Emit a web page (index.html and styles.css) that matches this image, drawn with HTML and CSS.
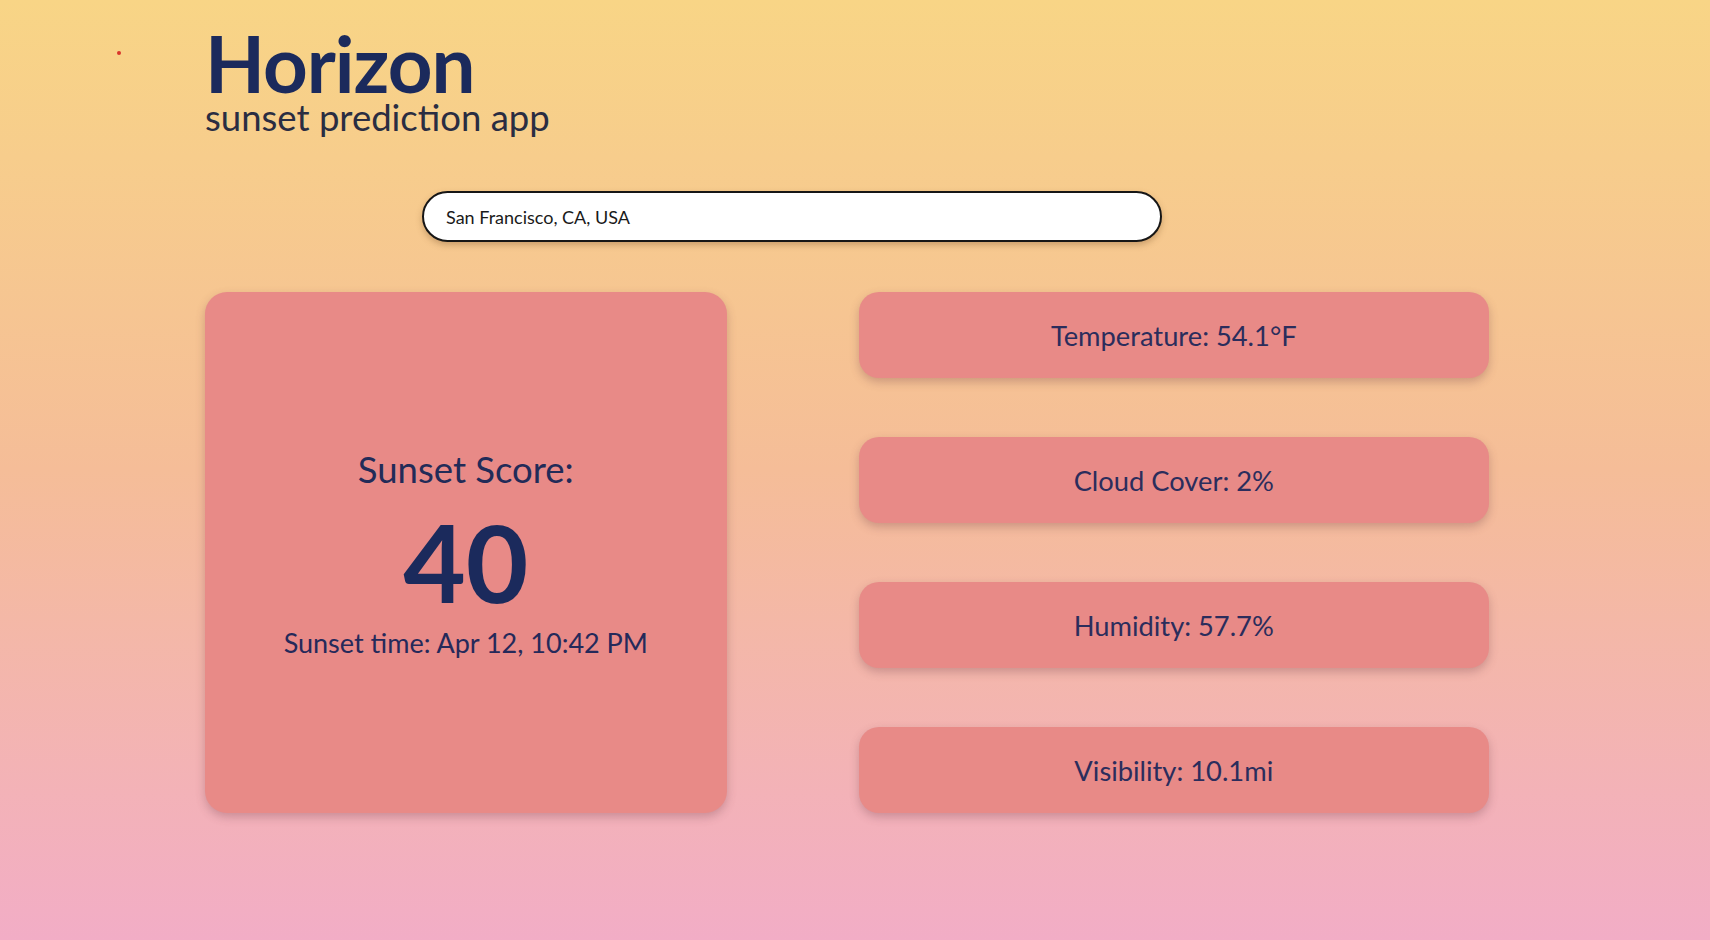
FILE: index.html
```html
<!DOCTYPE html>
<html lang="en">
<head>
<meta charset="utf-8">
<title>Horizon</title>
<link rel="stylesheet" href="styles.css">
</head>
<body>
<span class="dot"></span>
<main class="app">
  <header class="header">
    <h1 class="title">Horizon</h1>
    <p class="subtitle">sunset prediction app</p>
  </header>
  <div class="search-row">
    <input class="search" type="text" value="San Francisco, CA, USA">
  </div>
  <section class="grid">
    <div class="score-card">
      <div class="score-label">Sunset Score:</div>
      <div class="score-value">40</div>
      <div class="score-time">Sunset time: Apr 12, 10:42 PM</div>
    </div>
    <div class="stats">
      <div class="stat">Temperature: 54.1°F</div>
      <div class="stat">Cloud Cover: 2%</div>
      <div class="stat">Humidity: 57.7%</div>
      <div class="stat">Visibility: 10.1mi</div>
    </div>
  </section>
</main>
</body>
</html>
```

FILE: styles.css
```css
* { box-sizing: border-box; }
html, body { height: 100%; }
body {
  margin: 0;
  min-height: 940px;
  font-family: Lato, "Noto Sans", sans-serif;
  background: linear-gradient(to bottom, #f8d586 0%, #f5bd98 50%, #f2adc6 100%);
  color: #1c2a5a;
  position: relative;
}
.dot {
  position: absolute;
  left: 117px;
  top: 51px;
  width: 4px;
  height: 4px;
  border-radius: 50%;
  background: #d9342b;
}
.app {
  padding: 30px 0 0 205px;
  width: 1489px;
}
.header { display: flex; flex-direction: column; }
.title {
  margin: 0;
  font-size: 78px;
  font-weight: 700;
  line-height: 66px;
  color: #1b2a5c;
  letter-spacing: -1px;
}
.subtitle {
  margin: 1px 0 0;
  font-size: 36.5px;
  font-weight: 400;
  line-height: 40px;
  color: #2a2d42;
}
.search-row {
  margin-top: 54px;
  padding-left: 217px;
}
.search {
  display: block;
  width: 740px;
  height: 51px;
  border: 2px solid #161616;
  border-radius: 26px;
  background: #fff;
  padding: 0 22px;
  font-family: Lato, "Noto Sans", sans-serif;
  font-size: 18px;
  color: #1a1a1a;
  box-shadow: 0 3px 6px rgba(120, 80, 40, 0.35);
  outline: none;
}
.grid {
  margin-top: 50px;
  display: flex;
  gap: 132px;
}
.score-card {
  width: 522px;
  height: 521px;
  background: #e88a87;
  border-radius: 22px;
  box-shadow: 0 4px 10px rgba(110, 60, 70, 0.3);
  display: flex;
  flex-direction: column;
  align-items: center;
  justify-content: center;
  color: #1c2a5a;
}
.score-label {
  font-size: 36.5px;
  line-height: 44px;
  color: #222b58;
}
.score-value {
  font-size: 108px;
  font-weight: 700;
  line-height: 108px;
  margin-top: 16px;
  color: #1b2a5c;
}
.score-time {
  font-size: 27px;
  line-height: 32px;
  color: #25295a;
  margin-top: 12px;
}
.stats {
  width: 631px;
  display: flex;
  flex-direction: column;
  justify-content: space-between;
}
.stat {
  height: 86px;
  background: #e88a87;
  border-radius: 20px;
  box-shadow: 0 4px 10px rgba(110, 60, 70, 0.3);
  display: flex;
  align-items: center;
  justify-content: center;
  font-size: 27.3px;
  color: #2b2d5c;
}
```
